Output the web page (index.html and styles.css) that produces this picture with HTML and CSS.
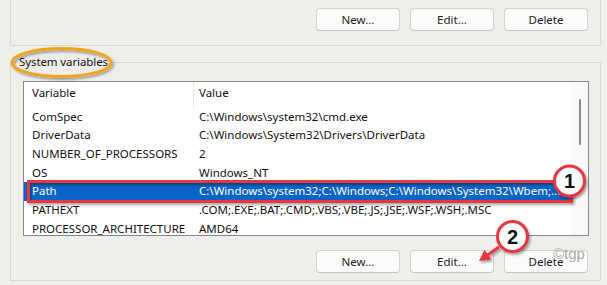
FILE: index.html
```html
<!DOCTYPE html>
<html lang="en">
<head>
  <meta charset="UTF-8" />
  <title>Environment Variables</title>
  <link rel="stylesheet" href="styles.css">
</head>
<body>
  <div class="window">
    <div class="user-group">
      <div class="button-row">
        <button>New...</button>
        <button>Edit...</button>
        <button>Delete</button>
      </div>
    </div>

    <fieldset class="system-group">
      <legend>System variables</legend>
      <div class="var-list">
        <div class="var-rows">
          <div class="var-head"><span>Variable</span><span class="col-value">Value</span></div>
          <div class="var-row"><span>ComSpec</span><span>C:\Windows\system32\cmd.exe</span></div>
          <div class="var-row"><span>DriverData</span><span>C:\Windows\System32\Drivers\DriverData</span></div>
          <div class="var-row"><span>NUMBER_OF_PROCESSORS</span><span>2</span></div>
          <div class="var-row"><span>OS</span><span>Windows_NT</span></div>
          <div class="var-row selected"><span>Path</span><span>C:\Windows\system32;C:\Windows;C:\Windows\System32\Wbem;...</span></div>
          <div class="var-row"><span>PATHEXT</span><span>.COM;.EXE;.BAT;.CMD;.VBS;.VBE;.JS;.JSE;.WSF;.WSH;.MSC</span></div>
          <div class="var-row"><span>PROCESSOR_ARCHITECTURE</span><span>AMD64</span></div>
        </div>
        <div class="scrollbar"><div class="thumb"></div></div>
      </div>
      <div class="button-row">
        <button>New...</button>
        <button>Edit...</button>
        <button>Delete</button>
      </div>
    </fieldset>

    <!-- annotation marks drawn over the dialog -->
    <svg class="marks" width="607" height="285" viewBox="0 0 607 285">
      <defs>
        <filter id="shade" x="-20%" y="-40%" width="140%" height="180%">
          <feDropShadow dx="1.5" dy="2" stdDeviation="1.2" flood-color="#000" flood-opacity="0.35" />
        </filter>
      </defs>
      <ellipse cx="61.5" cy="62.5" rx="49.5" ry="14" fill="none" stroke="#f2a51d" stroke-width="3" filter="url(#shade)" />
      <rect x="28.5" y="181.5" width="543" height="20" fill="none" stroke="#e9353e" stroke-width="3" filter="url(#shade)" />
      <text class="watermark" x="553" y="259">©tgp</text>
      <g filter="url(#shade)">
        <line x1="499" y1="247" x2="487" y2="255.5" stroke="#e9353e" stroke-width="3" />
        <polygon points="479,261 491.4,259.5 484.4,249.7" fill="#e9353e" />
      </g>
      <g filter="url(#shade)">
        <circle cx="569.5" cy="181" r="15" fill="#fff" stroke="#e9353e" stroke-width="3" />
        <circle cx="512.5" cy="236.5" r="15" fill="#fff" stroke="#e9353e" stroke-width="3" />
      </g>
      <text class="step" x="569.5" y="188">1</text>
      <text class="step" x="512.5" y="243.5">2</text>
    </svg>
  </div>
</body>
</html>
```

FILE: styles.css
```css
* { box-sizing: border-box; }
body { margin: 0; background: #eeeeeb; font-family: "Noto Sans", "Segoe UI", sans-serif; font-size: 11.5px; color: #111; }
.window { position: relative; width: 607px; height: 285px; padding: 0 6px 0 10px; overflow: hidden; }

.user-group { border: 1px solid #d8d8d8; border-top: none; padding: 8px 12px 14px; }
.button-row { display: flex; justify-content: flex-end; gap: 10px; }
.button-row button { width: 84px; height: 23px; padding: 0; font: inherit; color: #1b1b1b; background: #fbfbfb; border: 1px solid #d3d3d3; border-bottom-color: #c4c4c4; border-radius: 4px; }

.system-group { margin: 9px 0 0; min-width: 0; border: 1px solid #d8d8d8; padding: 12px 11px 7px 12px; }
.system-group legend { padding: 0 3px; margin-left: -7px; line-height: 14px; letter-spacing: -0.1px; }
.system-group .button-row { margin-top: 14px; padding-right: 1px; }

.var-list { display: flex; height: 155px; border: 1px solid #828790; background: #fff; overflow: hidden; }
.var-rows { flex: 1; min-width: 0; }
.var-head { display: grid; grid-template-columns: 169px 1fr; height: 25.67px; line-height: 16px; }
.var-head span { padding: 3px 0 0 8px; }
.var-head .col-value { border-left: 1px solid #e5e5e5; padding-left: 5px; }
.var-row { display: grid; grid-template-columns: 175px 1fr; height: 18.67px; line-height: 18.67px; white-space: nowrap; }
.var-row span { overflow: hidden; }
.var-row span:first-child { padding-left: 8px; }
.var-row.selected { background: #0a64c8; color: #fff; }
.scrollbar { width: 17px; background: #f9f9f9; padding-top: 17px; }
.thumb { width: 2px; height: 46px; margin: 0 auto; background: #8a8a8a; border-radius: 1px; }

.marks { position: absolute; left: 0; top: 0; pointer-events: none; }
.marks .step { font-family: "Liberation Sans", Arial, sans-serif; font-size: 20px; font-weight: bold; text-anchor: middle; fill: #111; }
.marks .watermark { font-family: "Liberation Sans", Arial, sans-serif; font-size: 15px; fill: #8c8c8c; fill-opacity: 0.75; }
```
